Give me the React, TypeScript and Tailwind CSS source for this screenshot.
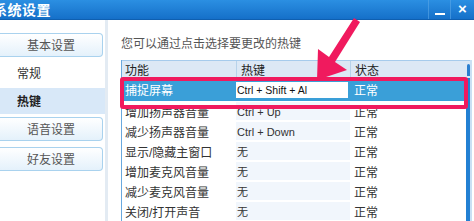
import React from "react";

const rows = [
  { name: "增加扬声器音量", key: "Ctrl + Up" },
  { name: "减少扬声器音量", key: "Ctrl + Down" },
  { name: "显示/隐藏主窗口", key: "无" },
  { name: "增加麦克风音量", key: "无" },
  { name: "减少麦克风音量", key: "无" },
  { name: "关闭/打开声音", key: "无" },
];

function SideButton({ label }: { label: string }) {
  return (
    <div className="h-[24px] w-[103px] rounded-r-[4px] border border-l-0 border-[#a9d2ee] bg-gradient-to-b from-[#ffffff] to-[#e4f1fb] flex items-center justify-center pt-[2px] text-[12px] text-[#555]">
      {label}
    </div>
  );
}

export default function App() {
  return (
    <div className="relative w-[474px] h-[221px] overflow-hidden bg-white font-['Liberation_Sans','Noto_Sans_CJK_SC',sans-serif] select-none">
      {/* title bar */}
      <div className="h-[20px] bg-gradient-to-b from-[#2b8fe2] to-[#1570c9] border-b border-[#0f5fb0] flex items-center">
        <div className="ml-[-7px] text-white text-[14px] font-bold leading-none tracking-[0.5px]">系统设置</div>
        <div className="ml-auto flex items-center h-full">
          <div className="w-px h-full bg-[#5aa6e6] opacity-60" />
          <div className="w-[21px] h-full flex items-end justify-center pb-[4px]">
            <div className="w-[10px] h-[2px] bg-white" />
          </div>
          <div className="w-px h-full bg-[#5aa6e6] opacity-60" />
          <div className="w-[23px] h-full flex items-center justify-center text-white text-[15px] font-bold leading-none pb-[3px]">×</div>
        </div>
      </div>

      <div className="flex h-[201px]">
        {/* sidebar */}
        <div className="w-[105px] flex flex-col pt-[13px]">
          <SideButton label="基本设置" />
          <div className="h-[27px] mt-[2px] flex items-center pl-[17px] pt-[2px] text-[12px] text-[#333]">常规</div>
          <div className="h-[26px] mt-[2px] flex items-center pl-[17px] pt-[2px] text-[12px] text-[#222] font-bold bg-[#d8e8f8]">热键</div>
          <div className="mt-[3px]">
            <SideButton label="语音设置" />
          </div>
          <div className="mt-[6px]">
            <SideButton label="好友设置" />
          </div>
        </div>
        {/* separator */}
        <div className="w-[3px] h-full bg-[#e3ebf3]" />

        {/* main */}
        <div className="flex-1 flex flex-col pl-[13px]">
          <div className="h-[43px] flex items-center text-[12px] text-[#555] pt-[8px]">您可以通过点击选择要更改的热键</div>
          <div className="flex w-[351px]">
            <div className="flex-1 flex flex-col border-l border-[#6aa9de]">
              {/* header */}
              <div className="h-[18px] flex bg-[#dce8f5] border-t border-[#a6cbec] text-[12px] text-[#222]">
                <div className="w-[114px] pl-[3px] pt-[3px] flex items-center">功能</div>
                <div className="w-[114px] pl-[4px] pt-[3px] flex items-center border-l border-[#b7d2ea]">热键</div>
                <div className="flex-1 pl-[4px] pt-[3px] flex items-center border-l border-[#b7d2ea]">状态</div>
              </div>
              {/* selected row */}
              <div className="h-[23px] flex bg-[#3a9fd8] text-[12px] text-white">
                <div className="w-[114px] pl-[3px] pt-[3px] flex items-center">捕捉屏幕</div>
                <div className="w-[114px] flex items-center pr-[2px] pt-[1px]">
                  <div className="w-full h-[16px] bg-white text-[#111] text-[10.5px] flex items-center pl-[1px] pt-[1px]">Ctrl + Shift + Al</div>
                </div>
                <div className="flex-1 pl-[4px] pt-[3px] flex items-center">正常</div>
              </div>
              {rows.map((r) => (
                <div key={r.name} className="h-[20px] flex text-[12px] text-[#333]">
                  <div className="w-[114px] pl-[3px] pt-[3px] flex items-center">{r.name}</div>
                  <div className="w-[114px] pl-[1px] pt-[3px] flex items-center bg-[#f1f6fc] border-y border-white text-[11px]">
                    {r.key}
                  </div>
                  <div className="flex-1 pl-[4px] pt-[3px] flex items-center">正常</div>
                </div>
              ))}
            </div>
            {/* scrollbar */}
            <div className="w-[4px] flex flex-col">
              <div className="h-[18px] bg-[#dce8f5] border-t border-[#a6cbec] flex justify-center pt-[3px]">
                <div className="w-[3px] h-[12px] rounded-t-full bg-[#2a7fd0]" />
              </div>
              <div className="flex-1 bg-[#2280d3]" />
            </div>
            <div className="w-[2px] bg-[#c9e0f4]" />
          </div>
        </div>
      </div>

      {/* pink highlight overlay */}
      <div className="absolute left-[120px] top-[77px] w-[348px] h-[32px] border-[4px] border-[#f01a5e] rounded-[3px]" />

      {/* pink arrow */}
      <svg className="absolute left-0 top-0" width="474" height="221" viewBox="0 0 474 221">
        <polygon
          points="354,18 360,22 335,62 347,70 317,80 318,49 329,57"
          fill="#f01a5e"
        />
      </svg>
    </div>
  );
}
